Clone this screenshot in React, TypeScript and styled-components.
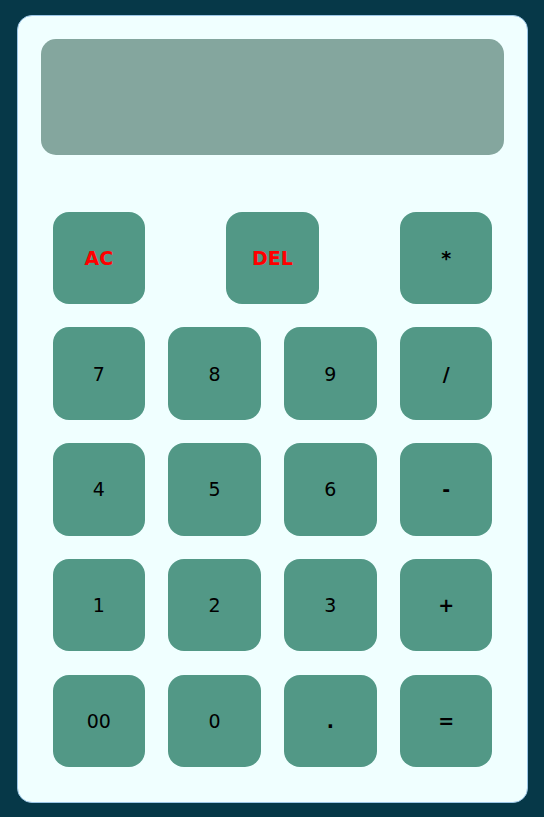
import React from "react";
import styled, { createGlobalStyle } from "styled-components";

const Global = createGlobalStyle`
  html, body { margin: 0; padding: 0; }
  body {
    background: #063848;
    font-family: "DejaVu Sans", Verdana, sans-serif;
  }
  #root { padding: 15px 17px; }
`;

const Card = styled.div`
  width: 511px;
  height: 788px;
  box-sizing: border-box;
  background: #f0ffff;
  border: 1px solid #9cc6e6;
  border-radius: 15px;
  padding: 23px 23px 0 23px;
  display: flex;
  flex-direction: column;
`;

const Display = styled.div`
  height: 116px;
  background: #84a69e;
  border-radius: 15px;
  margin-bottom: 45px;
`;

const Pad = styled.div`
  display: grid;
  grid-template-columns: repeat(4, 1fr);
  grid-auto-rows: 115.75px;
`;

const Cell = styled.div<{ $span?: number }>`
  grid-column: span ${(p) => p.$span ?? 1};
  display: flex;
  align-items: center;
  justify-content: center;
`;

const Key = styled.button<{ $kind: "num" | "op" | "clear" }>`
  width: 92.5px;
  height: 92.5px;
  border: none;
  border-radius: 16px;
  background: #529886;
  font-family: "DejaVu Sans", Verdana, sans-serif;
  font-size: 19px;
  font-weight: ${(p) => (p.$kind === "num" ? 400 : 700)};
  color: ${(p) => (p.$kind === "clear" ? "#ff0000" : "#000000")};
  padding: 0;
  cursor: pointer;
`;

type K = { label: string; kind: "num" | "op" | "clear"; span?: number };

const keys: K[] = [
  { label: "AC", kind: "clear" },
  { label: "DEL", kind: "clear", span: 2 },
  { label: "*", kind: "op" },
  { label: "7", kind: "num" },
  { label: "8", kind: "num" },
  { label: "9", kind: "num" },
  { label: "/", kind: "op" },
  { label: "4", kind: "num" },
  { label: "5", kind: "num" },
  { label: "6", kind: "num" },
  { label: "-", kind: "op" },
  { label: "1", kind: "num" },
  { label: "2", kind: "num" },
  { label: "3", kind: "num" },
  { label: "+", kind: "op" },
  { label: "00", kind: "num" },
  { label: "0", kind: "num" },
  { label: ".", kind: "op" },
  { label: "=", kind: "op" },
];

export default function App() {
  return (
    <>
      <Global />
      <Card>
        <Display />
        <Pad>
          {keys.map((k) => (
            <Cell key={k.label} $span={k.span}>
              <Key $kind={k.kind}>{k.label}</Key>
            </Cell>
          ))}
        </Pad>
      </Card>
    </>
  );
}
